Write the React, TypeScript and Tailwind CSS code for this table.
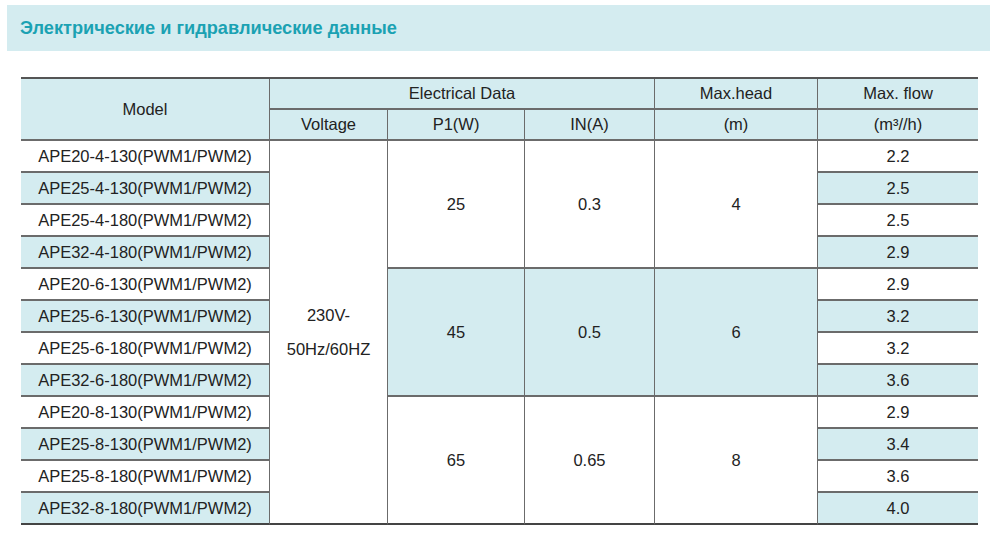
const models = [
  "APE20-4-130(PWM1/PWM2)",
  "APE25-4-130(PWM1/PWM2)",
  "APE25-4-180(PWM1/PWM2)",
  "APE32-4-180(PWM1/PWM2)",
  "APE20-6-130(PWM1/PWM2)",
  "APE25-6-130(PWM1/PWM2)",
  "APE25-6-180(PWM1/PWM2)",
  "APE32-6-180(PWM1/PWM2)",
  "APE20-8-130(PWM1/PWM2)",
  "APE25-8-130(PWM1/PWM2)",
  "APE25-8-180(PWM1/PWM2)",
  "APE32-8-180(PWM1/PWM2)",
];

const flows = ["2.2", "2.5", "2.5", "2.9", "2.9", "3.2", "3.2", "3.6", "2.9", "3.4", "3.6", "4.0"];

const groups = [
  { p1: "25", amps: "0.3", head: "4", tint: false },
  { p1: "45", amps: "0.5", head: "6", tint: true },
  { p1: "65", amps: "0.65", head: "8", tint: false },
];

const cell = "flex items-center justify-center border-b-2 border-[#6b6b6b]";
const vline = "border-r border-r-[#6b6b6b]";

export default function App() {
  return (
    <div
      className="w-[1000px] h-[548px] bg-white text-[#222] pt-[5px]"
      style={{ fontFamily: '"Liberation Sans", Arial, sans-serif' }}
    >
      {/* TITLE BANNER */}
      <div className="mx-[7px] w-[983px] h-[46px] bg-[#d4ecf0] flex items-center pl-[13px] pt-[2px]">
        <h1 className="text-[18.2px] font-bold text-[#1ba2b3]">
          Электрические и гидравлические данные
        </h1>
      </div>

      {/* TABLE */}
      <div
        className="
          ml-[21px] mt-[26px] w-[957px]
          grid grid-cols-[249px_118px_137px_130px_163px_160px]
          grid-rows-[31px_31px_repeat(12,32px)]
          border-t-2 border-[#555]
          text-[16.5px]
        "
      >
        {/* header row 1 */}
        <div className={`${cell} ${vline} row-span-2 bg-[#d4ecf0]`}>Model</div>
        <div className={`${cell} ${vline} col-span-3 bg-[#d4ecf0]`}>Electrical Data</div>
        <div className={`${cell} ${vline} bg-[#d4ecf0]`}>Max.head</div>
        <div className={`${cell} bg-[#d4ecf0]`}>Max. flow</div>

        {/* header row 2 */}
        <div className={`${cell} ${vline} bg-[#d4ecf0]`}>Voltage</div>
        <div className={`${cell} ${vline} bg-[#d4ecf0]`}>P1(W)</div>
        <div className={`${cell} ${vline} bg-[#d4ecf0]`}>IN(A)</div>
        <div className={`${cell} ${vline} bg-[#d4ecf0]`}>(m)</div>
        <div className={`${cell} bg-[#d4ecf0]`}>(m³//h)</div>

        {/* body */}
        {models.map((m, i) => {
          const blue = i % 2 === 1;
          const g = groups[Math.floor(i / 4)];
          const rowBg = blue ? "bg-[#d4ecf0]" : "bg-white";
          const last = i === models.length - 1;
          const line = last ? "border-b-[#444]" : "";
          const groupBg = g.tint ? "bg-[#d4ecf0]" : "bg-white";
          const groupLine = i === 8 ? "border-b-[#444]" : "";
          return [
            <div key={`m${i}`} className={`${cell} ${vline} ${rowBg} ${line}`}>
              {m}
            </div>,
            i === 0 && (
              <div
                key="volt"
                className={`${cell} ${vline} row-span-12 flex-col leading-[34px] border-b-[#444]`}
              >
                <span>230V-</span>
                <span>50Hz/60HZ</span>
              </div>
            ),
            i % 4 === 0 && [
              <div key={`p${i}`} className={`${cell} ${vline} row-span-4 ${groupBg} ${groupLine}`}>
                {g.p1}
              </div>,
              <div key={`a${i}`} className={`${cell} ${vline} row-span-4 ${groupBg} ${groupLine}`}>
                {g.amps}
              </div>,
              <div key={`h${i}`} className={`${cell} ${vline} row-span-4 ${groupBg} ${groupLine}`}>
                {g.head}
              </div>,
            ],
            <div key={`f${i}`} className={`${cell} ${rowBg} ${line}`}>
              {flows[i]}
            </div>,
          ];
        })}
      </div>
    </div>
  );
}
